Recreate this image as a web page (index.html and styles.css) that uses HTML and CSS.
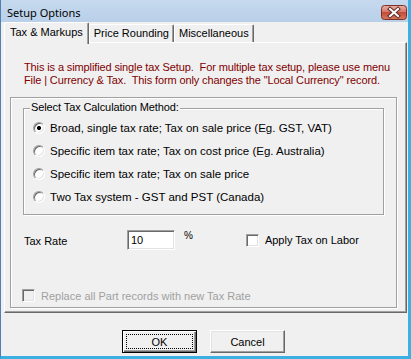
FILE: index.html
```html
<!DOCTYPE html>
<html>
<head>
<meta charset="utf-8">
<title>Setup Options</title>
<link rel="stylesheet" href="styles.css">
</head>
<body>
<div class="window">
  <div class="titlebar">
    <span class="title">Setup Options</span>
    <span class="close">
      <svg width="26" height="15" viewBox="0 0 26 15">
        <defs>
          <linearGradient id="cg" x1="0" y1="0" x2="0" y2="1">
            <stop offset="0" stop-color="#eab0a3"/>
            <stop offset="0.45" stop-color="#d6786a"/>
            <stop offset="0.5" stop-color="#c44c39"/>
            <stop offset="1" stop-color="#d57a5f"/>
          </linearGradient>
        </defs>
        <rect x="0.5" y="0.5" width="25" height="14" rx="3" fill="url(#cg)" stroke="#7d3027"/>
        <path d="M9 4 L17 11 M17 4 L9 11" stroke="#5b2d28" stroke-width="4" stroke-linecap="square"/>
        <path d="M9 4 L17 11 M17 4 L9 11" stroke="#ffffff" stroke-width="2" stroke-linecap="square"/>
      </svg>
    </span>
  </div>
  <div class="client">
    <div class="tabs">
      <div class="tab active">Tax &amp; Markups</div>
      <div class="tab">Price Rounding</div>
      <div class="tab">Miscellaneous</div>
    </div>
    <div class="panel">
      <p class="note">This is a simplified single tax Setup.&nbsp; For multiple tax setup, please use menu<br>File | Currency &amp; Tax.&nbsp; This form only changes the "Local Currency" record.</p>
      <div class="frame">
        <div class="group">
          <span class="group-label">Select Tax Calculation Method:</span>
          <div class="radios">
            <div class="radio"><span class="rb checked"></span>Broad, single tax rate; Tax on sale price (Eg. GST, VAT)</div>
            <div class="radio"><span class="rb"></span>Specific item tax rate; Tax on cost price (Eg. Australia)</div>
            <div class="radio"><span class="rb"></span>Specific item tax rate; Tax on sale price</div>
            <div class="radio"><span class="rb"></span>Two Tax system - GST and PST (Canada)</div>
          </div>
        </div>
        <div class="taxrow">
          <span class="taxlabel">Tax Rate</span>
          <input class="edit" type="text" value="10">
          <span class="pct">%</span>
          <span class="check"><span class="cb"></span>Apply Tax on Labor</span>
        </div>
        <div class="replace"><span class="cb disabled"></span>Replace all Part records with new Tax Rate</div>
      </div>
    </div>
    <div class="buttons">
      <button class="btn default">OK</button>
      <button class="btn">Cancel</button>
    </div>
  </div>
</div>
</body>
</html>
```

FILE: styles.css
```css
body {
  margin: 0;
  width: 411px;
  height: 359px;
  overflow: hidden;
  font-family: "Liberation Sans", Arial, sans-serif;
  font-size: 11px;
  color: #000;
}

.window {
  box-sizing: border-box;
  width: 411px;
  height: 359px;
  background: #f0f0f0;
  border-left: 1px solid #4f7fb3;
  border-right: 3px solid #3bb0e3;
  border-bottom: 3px solid #3bb0e3;
  display: flex;
  flex-direction: column;
}

.titlebar {
  flex: none;
  height: 22px;
  box-sizing: border-box;
  display: flex;
  align-items: center;
  justify-content: space-between;
  padding: 0 1px 0 6px;
  background: linear-gradient(to bottom, #c6d9ee, #b9d0e9);
}

.title {
  font-family: "Noto Sans", "Open Sans", sans-serif;
  font-size: 11px;
  padding-top: 3px;
}

.close {
  display: flex;
  padding-top: 2px;
}

.client {
  flex: 1;
  display: flex;
  flex-direction: column;
  padding: 0 1px 0 3px;
}

.tabs {
  display: flex;
  align-items: flex-end;
  height: 20px;
  position: relative;
  z-index: 1;
}

.tab {
  box-sizing: border-box;
  height: 18px;
  line-height: 17px;
  padding: 0 4px;
  background: #f0f0f0;
  border-top: 1px solid #fff;
  border-left: 1px solid #fff;
  border-right: 1px solid #696969;
  box-shadow: inset -1px 0 #a0a0a0;
  border-radius: 2px 2px 0 0;
  white-space: nowrap;
}

.tab.active {
  height: 22px;
  margin-bottom: -2px;
  line-height: 18px;
  padding: 0 5px;
}

.panel {
  box-sizing: border-box;
  height: 271px;
  border-top: 1px solid #fff;
  border-left: 1px solid #fff;
  border-right: 1px solid #696969;
  border-bottom: 1px solid #696969;
  box-shadow: inset -1px -1px #a0a0a0;
  display: flex;
  flex-direction: column;
}

.note {
  margin: 18px 0 0 19px;
  line-height: 13px;
  color: #800000;
  white-space: nowrap;
  letter-spacing: -0.12px;
}

.frame {
  box-sizing: border-box;
  height: 211px;
  margin: 10px 9px 0 5px;
  border: 1px solid #a0a0a0;
  box-shadow: inset 1px 1px #fff, 1px 1px #fff;
  display: flex;
  flex-direction: column;
}

.group {
  margin: 10px 12px 0 12px;
  border: 1px solid #a0a0a0;
  box-shadow: inset 1px 1px #fff, 1px 1px #fff;
  padding-bottom: 6px;
}

.group-label {
  display: block;
  width: max-content;
  margin: -8px 0 0 6px;
  padding: 0 1px;
  line-height: 13px;
  background: #f0f0f0;
  letter-spacing: -0.1px;
}

.radios {
  padding: 2px 0 0 9px;
}

.radio {
  display: flex;
  align-items: center;
  height: 23px;
  white-space: nowrap;
  font-size: 11.5px;
}

.rb {
  box-sizing: border-box;
  width: 12px;
  height: 12px;
  margin-right: 5px;
  border-radius: 50%;
  border: 1px solid;
  border-color: #a0a0a0 #fff #fff #a0a0a0;
  background: #fff;
  box-shadow: inset 1px 1px #696969, inset -1px -1px #e3e3e3;
}

.rb.checked {
  background: radial-gradient(circle, #000 0, #000 1.8px, #fff 2.3px);
}

.taxrow {
  display: flex;
  align-items: center;
  height: 20px;
  margin-top: 15px;
  padding-left: 13px;
}

.taxlabel {
  width: 103px;
  padding-top: 2px;
}

.edit {
  box-sizing: border-box;
  width: 48px;
  height: 20px;
  margin: 0;
  padding: 0 0 0 3px;
  font: inherit;
  color: #000;
  background: #fff;
  border: 1px solid;
  border-color: #a0a0a0 #fff #fff #a0a0a0;
  box-shadow: inset 1px 1px #696969, inset -1px -1px #e3e3e3;
  outline: none;
}

.pct {
  align-self: flex-start;
  margin-left: 9px;
  font-size: 10px;
  line-height: 11px;
}

.check {
  display: flex;
  align-items: center;
  margin-left: 53px;
  white-space: nowrap;
}

.cb {
  box-sizing: border-box;
  width: 13px;
  height: 13px;
  margin-right: 6px;
  background: #fff;
  border: 1px solid;
  border-color: #a0a0a0 #fff #fff #a0a0a0;
  box-shadow: inset 1px 1px #696969, inset -1px -1px #e3e3e3;
  flex: none;
}

.cb.disabled {
  background: #f0f0f0;
}

.replace {
  display: flex;
  align-items: center;
  height: 13px;
  margin: auto 0 5px 0;
  padding-left: 11px;
  color: #a0a0a0;
  white-space: nowrap;
}

.buttons {
  display: flex;
  justify-content: center;
  gap: 13px;
  margin-top: 17px;
  padding-right: 4px;
}

.btn {
  box-sizing: border-box;
  width: 75px;
  height: 23px;
  margin: 0;
  padding: 0;
  font: inherit;
  color: #000;
  background: #f0f0f0;
  border: 1px solid;
  border-color: #fff #696969 #696969 #fff;
  box-shadow: inset -1px -1px #a0a0a0, inset 1px 1px #e3e3e3;
  border-radius: 0;
}

.btn.default {
  border: 1px solid #000;
  box-shadow: inset 1px 1px #fff, inset -1px -1px #696969, inset -2px -2px #a0a0a0;
  outline: 1px dotted #000;
  outline-offset: -5px;
}
```
